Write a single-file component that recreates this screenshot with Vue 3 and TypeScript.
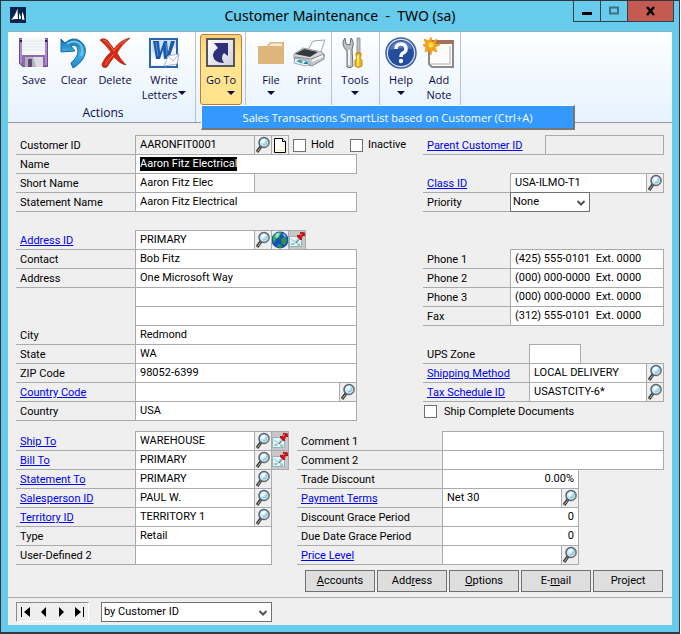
<script setup lang="ts">
import { onMounted, ref } from 'vue'

type Tool = 'lookup' | 'note' | 'globe' | 'map'

interface Field {
  id: string
  label: string
  value?: string
  link?: boolean
  size?: 'short' | 'medium' | 'one' | 'two' | 'three' | 'zone'
  tools?: Tool[]
  align?: 'right'
  readonly?: boolean
  kind?: 'select' | 'account'
}

const identity = ref<Field[]>([
  { id: 'customer', label: 'Customer ID', value: 'AARONFIT0001', size: 'two', tools: ['lookup', 'note'], readonly: true, kind: 'account' },
  { id: 'name', label: 'Name', value: 'Aaron Fitz Electrical' },
  { id: 'short-name', label: 'Short Name', value: 'Aaron Fitz Elec', size: 'short' },
  { id: 'statement-name', label: 'Statement Name', value: 'Aaron Fitz Electrical' },
])

const address = ref<Field[]>([
  { id: 'address-id', label: 'Address ID', value: 'PRIMARY', link: true, size: 'three', tools: ['lookup', 'globe', 'map'] },
  { id: 'contact', label: 'Contact', value: 'Bob Fitz' },
  { id: 'address1', label: 'Address', value: 'One Microsoft Way' },
  { id: 'address2', label: '' },
  { id: 'address3', label: '' },
  { id: 'city', label: 'City', value: 'Redmond' },
  { id: 'state', label: 'State', value: 'WA' },
  { id: 'zip', label: 'ZIP Code', value: '98052-6399' },
  { id: 'country-code', label: 'Country Code', link: true, tools: ['lookup'] },
  { id: 'country', label: 'Country', value: 'USA' },
])

const parent = ref<Field[]>([
  { id: 'parent', label: 'Parent Customer ID', link: true, readonly: true },
])

const classes = ref<Field[]>([
  { id: 'class', label: 'Class ID', value: 'USA-ILMO-T1', link: true, tools: ['lookup'] },
  { id: 'priority', label: 'Priority', value: 'None', kind: 'select' },
])

const phones = ref<Field[]>([
  { id: 'phone1', label: 'Phone 1', value: '(425) 555-0101  Ext. 0000' },
  { id: 'phone2', label: 'Phone 2', value: '(000) 000-0000  Ext. 0000' },
  { id: 'phone3', label: 'Phone 3', value: '(000) 000-0000  Ext. 0000' },
  { id: 'fax', label: 'Fax', value: '(312) 555-0101  Ext. 0000' },
])

const shipping = ref<Field[]>([
  { id: 'ups', label: 'UPS Zone', size: 'zone' },
  { id: 'method', label: 'Shipping Method', value: 'LOCAL DELIVERY', link: true, tools: ['lookup'] },
  { id: 'tax', label: 'Tax Schedule ID', value: 'USASTCITY-6*', link: true, tools: ['lookup'] },
])

const accounts = ref<Field[]>([
  { id: 'ship-to', label: 'Ship To', value: 'WAREHOUSE', link: true, size: 'two', tools: ['lookup', 'map'] },
  { id: 'bill-to', label: 'Bill To', value: 'PRIMARY', link: true, size: 'two', tools: ['lookup', 'map'] },
  { id: 'statement-to', label: 'Statement To', value: 'PRIMARY', link: true, size: 'one', tools: ['lookup'] },
  { id: 'salesperson', label: 'Salesperson ID', value: 'PAUL W.', link: true, size: 'one', tools: ['lookup'] },
  { id: 'territory', label: 'Territory ID', value: 'TERRITORY 1', link: true, size: 'one', tools: ['lookup'] },
  { id: 'type', label: 'Type', value: 'Retail', size: 'medium' },
  { id: 'user2', label: 'User-Defined 2', size: 'medium' },
])

const terms = ref<Field[]>([
  { id: 'comment1', label: 'Comment 1' },
  { id: 'comment2', label: 'Comment 2' },
  { id: 'discount', label: 'Trade Discount', value: '0.00%', size: 'medium', align: 'right' },
  { id: 'payment', label: 'Payment Terms', value: 'Net 30', link: true, size: 'one', tools: ['lookup'] },
  { id: 'discount-grace', label: 'Discount Grace Period', value: '0', size: 'medium', align: 'right' },
  { id: 'due-grace', label: 'Due Date Grace Period', value: '0', size: 'medium', align: 'right' },
  { id: 'price', label: 'Price Level', link: true, size: 'one', tools: ['lookup'] },
])

const sections = [
  { name: 'identity', rows: identity },
  { name: 'address', rows: address },
  { name: 'parent', rows: parent },
  { name: 'classes', rows: classes },
  { name: 'phones', rows: phones },
  { name: 'shipping', rows: shipping },
  { name: 'accounts', rows: accounts },
  { name: 'terms', rows: terms },
]

const panels = [
  { name: 'left', sections: sections.slice(0, 2) },
  { name: 'right', sections: sections.slice(2, 6) },
  { name: 'bottom-left', sections: sections.slice(6, 7) },
  { name: 'bottom-right', sections: sections.slice(7) },
]

const toolNames: Record<Tool, string> = {
  lookup: 'Look up',
  note: 'Note',
  globe: 'Internet information',
  map: 'Show on map',
}

const actions = [
  ['', 'A', 'ccounts'],
  ['Add', 'r', 'ess'],
  ['', 'O', 'ptions'],
  ['E-', 'm', 'ail'],
  ['Project', '', ''],
]

const hold = ref(false)
const inactive = ref(false)
const shipComplete = ref(false)
const sortBy = ref('by Customer ID')

onMounted(() => {
  const name = document.getElementById('name') as HTMLInputElement | null
  name?.focus()
  name?.select()
})
</script>

<template>
  <main class="window">
    <header class="titlebar">
      <svg class="app-icon" width="16" height="16" viewBox="0 0 16 16">
        <rect width="16" height="16" fill="#06234d" />
        <path d="M1 13Q5 9 7.500 1.500L8 12Q4 11.500 1 13zM9 12V6Q11 8 11 12zM12 12.500V4.500Q14.500 8 14.500 13z" fill="#fff" />
      </svg>
      <h1>Customer Maintenance&nbsp; -&nbsp; TWO (sa)</h1>
      <div class="window-buttons">
        <button type="button" aria-label="Minimize">
          <svg width="12" height="12"><path d="M1 7h10v3H1z" fill="#000" /></svg>
        </button>
        <button type="button" aria-label="Maximize">
          <svg width="12" height="12"><path d="M2 2.500h8v6H2z" fill="none" stroke="#3f7184" stroke-width="2" /></svg>
        </button>
        <button type="button" class="close" aria-label="Close">
          <svg width="12" height="12"><path d="M2 2l7 8M9 2l-7 8" stroke="#000" stroke-width="2.500" /></svg>
        </button>
      </div>
    </header>

    <nav class="ribbon" aria-label="Ribbon">
      <div class="group actions-group">
        <div class="group-items">
          <button type="button" class="tool w40">
            <svg width="32" height="32" viewBox="0 0 32 32">
              <path d="M1.500 1.500h28v28H4.500l-3-3z" fill="#9166b4" stroke="#6f4a94" />
              <path d="M2 2h2v24H2zM27 2h2v26h-2z" fill="#ad8aca" />
              <rect x="4" y="1" width="23" height="17" fill="#f5f7f9" />
              <path d="M4 4h23M4 7h23M4 10h23M4 13h23" stroke="#e3e8ea" />
              <rect x="7" y="20" width="18" height="10" fill="#b0b3b6" />
              <path d="M15 20h10v10h-7z" fill="#dcddde" />
              <path d="M10 22h4v8h-4z" fill="#5f4878" />
              <path d="M2 4h2M27 4h2" stroke="#2a1944" stroke-width="2" />
            </svg>
            <span>Save</span>
          </button>
          <button type="button" class="tool w40">
            <svg width="32" height="32" viewBox="0 0 32 32">
              <defs>
                <linearGradient id="undo" x1="0" y1="0" x2="0" y2="1">
                  <stop offset="0" stop-color="#1a6fae" /><stop offset=".5" stop-color="#3fb1e6" /><stop offset="1" stop-color="#1d87c4" />
                </linearGradient>
              </defs>
              <path d="M3 2l4 4Q15-1 22 4Q29 9 27 17Q25 25 15 31L13 26Q20 20 20 14Q19 6 13 9L17 14L3 15z" fill="url(#undo)" stroke="#176ba1" />
              <path d="M9 7Q16 2 22 7Q26 12 23 19" fill="none" stroke="#6dc6ee" stroke-width="2" />
            </svg>
            <span>Clear</span>
          </button>
          <button type="button" class="tool w42">
            <svg width="32" height="32" viewBox="0 0 32 32">
              <path d="M1 3Q5 0 9 4L15 12Q21 3 31 1Q22 8 18 16Q21 22 27 28Q21 27 15 20Q11 25 8 30Q3 32 3 27Q6 20 12 15Q7 8 1 3z" fill="#d62914" stroke="#a9200e" stroke-width=".7" />
              <path d="M4 3Q8 3 15 14Q20 6 27 3M6 28Q9 22 15 17" fill="none" stroke="#ee6a50" />
            </svg>
            <span>Delete</span>
          </button>
          <button type="button" class="tool w56">
            <svg width="32" height="32" viewBox="0 0 32 32">
              <rect x="2" y="2" width="27" height="28" fill="#eaf2fb" stroke="#2a66b0" stroke-width="2" />
              <path d="M4 3h24v8L4 16z" fill="#cfe1f5" />
              <path d="M3 21h16v7H3z" fill="#fff" />
              <path d="M5 4h6l1 11 4-11h3l1 11 3-11h4l-6 18h-5l-1-9-3 9H8z" fill="#1b59ae" />
              <path d="M8 5l2 14M18 6l1 12" stroke="#5490d8" />
              <path d="M20 19l11-2-2 10-13 2z" fill="#fff" stroke="#a5b6cc" />
              <path d="M20 19l5 5 6-7" fill="none" stroke="#a9b6c8" />
            </svg>
            <span>Write</span>
            <span class="with-arrow">Letters<i class="arrow"></i></span>
          </button>
        </div>
        <div class="group-title">Actions</div>
      </div>

      <div class="group goto-group">
        <button type="button" class="tool goto w42" aria-haspopup="menu" aria-expanded="true">
          <svg width="32" height="32" viewBox="0 0 32 32">
            <defs>
              <linearGradient id="goto" x1="0" y1="0" x2="1" y2="1">
                <stop offset="0" stop-color="#fff" /><stop offset="1" stop-color="#cfd0dc" />
              </linearGradient>
            </defs>
            <rect x="2" y="2" width="27" height="27" fill="url(#goto)" stroke="#55555e" stroke-width="2" />
            <path d="M9 6h14v13l-4-3Q15 20 19 26Q9 26 8 19Q8 14 13 11z" fill="#2e2f7a" />
          </svg>
          <span>Go To</span>
          <i class="arrow"></i>
        </button>
        <div class="menu" role="menu">
          <button type="button" role="menuitem">Sales Transactions SmartList based on Customer (Ctrl+A)</button>
        </div>
      </div>

      <div class="group file-group">
        <button type="button" class="tool w38">
          <svg width="32" height="32" viewBox="0 0 32 32">
            <path d="M3 9h9l3-4h14v22H3z" fill="#dcb67a" />
            <path d="M14 9l2-2.500h11V9z" fill="#f6ecdc" />
          </svg>
          <span>File</span>
          <i class="arrow"></i>
        </button>
        <button type="button" class="tool w38">
          <svg width="32" height="32" viewBox="0 0 32 32">
            <path d="M20 4l12-1-5 14-12-4z" fill="#fff" stroke="#a0a4a8" />
            <path d="M1 17l9-6 19 4 3 4-12 6L1 22z" fill="#d5d8da" stroke="#9a9ea2" />
            <path d="M2 17l9-5 14 3-8 5z" fill="#35383a" />
            <path d="M2 20l16 2 13-5v5l-12 7-17-5z" fill="#c3c6c9" stroke="#8b8f93" />
            <path d="M2 21l12 3 4 3-6 2-11-3z" fill="#e7f5fa" stroke="#888" stroke-width=".7" />
            <path d="M3 24l4-1 1 3zM10 27l3-3 3 3z" fill="#1587c0" />
            <path d="M7 23l3 1-2 3z" fill="#3ba35b" />
            <path d="M19 24l11-5" stroke="#f5f6f6" stroke-width="2" />
          </svg>
          <span>Print</span>
        </button>
      </div>

      <div class="group tools-group">
        <button type="button" class="tool w38">
          <svg width="32" height="32" viewBox="0 0 32 32">
            <path d="M6 1l1 6 4 1 1-7q4 4 1 11l1 17q-3 3-6 1V14Q1 7 6 1z" fill="#bfc3c6" stroke="#686d70" />
            <path d="M10 13v15" stroke="#f4f4f4" stroke-width="2" />
            <path d="M18 1h3v15h-3z" fill="#bfc3c6" stroke="#73777a" stroke-width=".7" />
            <path d="M17 16h5v3l-1 2 2 2v6q-3 3-7 0v-6l2-2-1-2z" fill="#f2b413" stroke="#b8780c" stroke-width=".8" />
            <path d="M19 18v11" stroke="#ffe480" stroke-width="2" />
          </svg>
          <span>Tools</span>
          <i class="arrow"></i>
        </button>
      </div>

      <div class="group help-group">
        <button type="button" class="tool w38">
          <svg width="32" height="32" viewBox="0 0 32 32">
            <circle cx="16" cy="16" r="15" fill="#dce6f6" stroke="#405f9c" stroke-width="1.500" />
            <circle cx="16" cy="16" r="13" fill="#244d9f" />
            <path d="M4 13Q8 3 17 4q8 0 10 8-11-2-23 1z" fill="#5478bd" />
            <path d="M11 12Q11 7 16 7q5 0 5 5 0 3-3 4-2 1-2 4" fill="none" stroke="#fff" stroke-width="3.500" />
            <circle cx="16" cy="24" r="2.200" fill="#fff" />
          </svg>
          <span>Help</span>
          <i class="arrow"></i>
        </button>
        <button type="button" class="tool w38">
          <svg width="32" height="32" viewBox="0 0 32 32">
            <path d="M6 5h24v25H9l-3-3z" fill="#fbfbfb" stroke="#8a8a8a" stroke-width="2" />
            <path d="M6 3h25v4H7z" fill="#a66f58" />
            <path d="M8 27h19V9" fill="none" stroke="#d4d4d4" stroke-width="2" />
            <path d="M8 0l1 5 5-3-2 5 5 1-5 2 2 5-5-2-1 5-2-5-4 2 1-5-4-2 4-1-2-5 5 2z" fill="#f6a31a" stroke="#e68f12" stroke-width=".7" />
            <circle cx="8" cy="8" r="2.500" fill="#ffe054" />
          </svg>
          <span>Add</span>
          <span>Note</span>
        </button>
      </div>
    </nav>

    <form class="form" @submit.prevent>
      <div v-for="panel in panels" :key="panel.name" class="panel" :class="panel.name">
        <section v-for="section in panel.sections" :key="section.name" :class="['fields', section.name]">
          <div v-for="field in section.rows.value" :key="field.id" class="row">
            <div class="caption" :class="{ blank: !field.label }">
              <a v-if="field.link" :id="field.id + '-label'" href="#">{{ field.label }}</a>
              <label v-else :id="field.id + '-label'" :for="field.id">{{ field.label }}</label>
            </div>
            <div v-if="field.kind === 'select'" class="picker priority">
              <select :id="field.id" v-model="field.value">
                <option>None</option>
                <option>Low</option>
                <option>High</option>
              </select>
              <svg width="8" height="6" viewBox="0 0 8 6"><path d="M.5 1L4 4.500 7.500 1" fill="none" stroke="#555" stroke-width="2" /></svg>
            </div>
            <div v-else class="control" :class="field.size ?? 'wide'">
              <input
                :id="field.id"
                v-model="field.value"
                type="text"
                :class="[field.align, { locked: field.readonly }]"
                :readonly="field.readonly"
                :aria-labelledby="field.id + '-label'"
                spellcheck="false"
                autocomplete="off"
              />
              <button
                v-for="tool in field.tools"
                :key="tool"
                type="button"
                :class="['mini', tool]"
                :aria-label="toolNames[tool]"
              >
                <svg v-if="tool === 'lookup'" width="16" height="18" viewBox="0 0 16 18">
                  <path d="M6 10.500L2 16" stroke="#333" stroke-width="3" />
                  <path d="M5.500 11.500L2.500 15.500" stroke="#c8c8a8" stroke-width="1" />
                  <circle cx="9" cy="6.500" r="5" fill="#c8e7f8" stroke="#56636f" stroke-width="1.500" />
                  <path d="M6 6q1-3 4-3v2l-2 2z" fill="#fff" />
                  <path d="M8 9l3-1 1-3" fill="none" stroke="#8cc6ec" stroke-width="1.500" />
                  <path d="M14 4v4q-1 3-4 4" fill="none" stroke="#9b9271" />
                </svg>
                <svg v-else-if="tool === 'note'" width="16" height="18" viewBox="0 0 16 18">
                  <path d="M2.500 2.500h8l3 3v11h-11z" fill="#fff" stroke="#000" />
                  <path d="M10.500 2.500v3h3" fill="#fff" stroke="#000" />
                  <path d="M4 14.500h9M12 8v6" stroke="#ecd75c" stroke-dasharray="1 1" />
                </svg>
                <svg v-else-if="tool === 'globe'" width="16" height="18" viewBox="0 0 16 18">
                  <circle cx="8" cy="9" r="8.500" fill="#1550b4" />
                  <path d="M1 6q2-5 7-5 3 1 0 3l-1 3-3 1-2 4q-2-3-1-6z" fill="#37a85e" />
                  <path d="M9 8l4-2 2 3-2 5-3-1zM6 13l4 1-1 3-4-1z" fill="#2d9648" />
                  <path d="M4 3q3-2 4 0L5 7 3 6z" fill="#9ce0c4" />
                  <path d="M11 3l3 3" stroke="#67a9ec" stroke-width="2" />
                </svg>
                <svg v-else width="16" height="18" viewBox="0 0 16 18">
                  <path d="M.5 5.500h12v10H.5z" fill="#e4f4f7" stroke="#8fb4bf" />
                  <path d="M2 8l4 3 3-3M3 14l4-3 4 3" fill="none" stroke="#a5d5e3" stroke-width="1.500" />
                  <path d="M2 13h3M8 14h3" stroke="#79b67a" />
                  <path d="M10 8.500L7 12" stroke="#555" />
                  <path d="M11 1h4l1 1v3h-2l-1 2v2h-2L8 6V4h2l1-1z" fill="#cc1c22" />
                  <path d="M8 4l5 5M11 1l5 4" stroke="#8e1117" stroke-width=".8" />
                  <path d="M11 4l2-1.500" stroke="#f57a74" />
                </svg>
              </button>
            </div>
            <div v-if="field.kind === 'account'" class="checks">
              <label><input v-model="hold" type="checkbox" />Hold</label>
              <label><input v-model="inactive" type="checkbox" />Inactive</label>
            </div>
          </div>
        </section>
        <label v-if="panel.name === 'right'" class="ship-complete">
          <input v-model="shipComplete" type="checkbox" />Ship Complete Documents
        </label>
        <div v-if="panel.name === 'bottom-right'" class="commands">
          <button v-for="part in actions" :key="part.join('')" type="button">{{ part[0] }}<u>{{ part[1] }}</u>{{ part[2] }}</button>
        </div>
      </div>
    </form>

    <footer class="footer">
      <div class="pager">
        <button type="button" aria-label="First record">
          <svg width="10" height="10"><path d="M0 0h1v10H0zM9 0v10L3 5z" /></svg>
        </button>
        <button type="button" aria-label="Previous record">
          <svg width="10" height="10"><path d="M7 0v10L2 5z" /></svg>
        </button>
        <button type="button" aria-label="Next record">
          <svg width="10" height="10"><path d="M3 0v10l5-5z" /></svg>
        </button>
        <button type="button" aria-label="Last record">
          <svg width="10" height="10"><path d="M9 0h1v10H9zM1 0v10l6-5z" /></svg>
        </button>
      </div>
      <div class="picker sort">
        <select v-model="sortBy" aria-label="Sort customers">
          <option>by Customer ID</option>
          <option>by Name</option>
          <option>by Class ID</option>
        </select>
        <svg width="8" height="6" viewBox="0 0 8 6"><path d="M.5 1L4 4.500 7.500 1" fill="none" stroke="#555" stroke-width="2" /></svg>
      </div>
    </footer>
  </main>
</template>

<style>
body {
  margin: 0;
  background: #fff;
}
</style>

<style scoped>
* {
  box-sizing: border-box;
}
button,
input,
select {
  margin: 0;
  font: inherit;
  color: inherit;
}
svg {
  display: block;
}
.window {
  margin-right: 1px;
  padding: 0 7px 7px;
  border: 1px solid #33363b;
  border-bottom-width: 2px;
  background: #67cbeb;
  color: #000;
  font-family: Roboto, 'Liberation Sans', sans-serif;
  font-size: 11px;
  line-height: 14px;
}

/* Title bar */
.titlebar {
  display: grid;
  grid-template-columns: 100px 1fr 100px;
  align-items: start;
  height: 30px;
}
.app-icon {
  margin: 6px 2px;
}
h1 {
  margin: 0;
  text-align: center;
  font: 400 14px/30px 'Noto Sans', 'Open Sans', sans-serif;
  white-space: nowrap;
}
.window-buttons {
  display: flex;
  justify-self: end;
  height: 21px;
  border: 1px solid #33404a;
  border-top: 0;
  margin-right: -2px;
}
.window-buttons button {
  display: grid;
  place-items: center;
  width: 27px;
  padding: 0;
  border: 0;
  border-right: 1px solid #33404a;
  background: none;
}
.window-buttons .close {
  width: 45px;
  border-right: 0;
  background: #c45a50;
}

/* Ribbon */
.ribbon {
  display: flex;
  height: 92px;
  border-top: 1px solid #8fb3c4;
  border-bottom: 1px solid #8e969e;
  background: linear-gradient(#fdfeff, #e6f2fd);
  color: #0a0a4a;
  font: 11px/15px 'Open Sans', 'Noto Sans', sans-serif;
}
.group {
  display: flex;
  border-right: 1px solid #b9c3cd;
  padding: 0 3px 0 6px;
}
.actions-group {
  flex-direction: column;
}
.group-items {
  display: flex;
}
.group-title {
  text-align: center;
  font-size: 12px;
  line-height: 16px;
}
.goto-group {
  position: relative;
  padding: 0 3px 0 4px;
}
.tools-group {
  padding: 0 5px 0 4px;
}
.help-group {
  padding: 0 2px;
}
.tool {
  display: flex;
  flex-direction: column;
  align-items: center;
  height: 71px;
  margin-top: 2px;
  padding: 2px 0 0;
  border: 1px solid transparent;
  border-radius: 3px;
  background: none;
  white-space: nowrap;
}
.tool svg {
  flex: none;
  margin-bottom: 3px;
}
.w38 {
  width: 38px;
}
.w40 {
  width: 40px;
}
.w42 {
  width: 42px;
}
.w56 {
  width: 56px;
}
.goto {
  border-color: #c07c31;
  background: linear-gradient(#f8cf78, #ffe391 30%, #ffe38c);
}
.arrow {
  width: 0;
  height: 0;
  margin-top: 4px;
  border: 4px solid transparent;
  border-top-color: #0a0a4a;
  border-bottom: 0;
}
.goto .arrow {
  align-self: flex-end;
  margin-right: 6px;
}
.with-arrow {
  display: flex;
  gap: 1px;
}
.menu {
  position: absolute;
  z-index: 2;
  top: 73px;
  left: 5px;
  width: 374px;
  border: 1px solid #fff;
  border-right: 2px solid #777;
  border-bottom: 2px solid #777;
}
.menu button {
  display: block;
  width: 100%;
  height: 22px;
  padding: 0;
  border: 0;
  background: #3399ff;
  color: #fff;
  white-space: nowrap;
}

/* Form */
.form {
  display: grid;
  grid-template-columns: 273fr 118fr 241fr;
  column-gap: 8px;
  row-gap: 10px;
  padding: 12px 8px 5px;
  background: #efefef;
}
.panel {
  display: flex;
  flex-direction: column;
}
.left {
  grid-column: 1 / 3;
  gap: 18px;
}
.right {
  grid-column: 3;
}
.bottom-left {
  grid-column: 1;
}
.bottom-right {
  grid-column: 2 / 4;
}
.classes {
  margin: 18px 0 37px;
}
.phones {
  margin-bottom: 18px;
}
.row {
  display: flex;
  height: 20px;
}
.row + .row {
  margin-top: -1px;
}
.caption {
  flex: 0 0 119px;
  padding: 4px 0 0 4px;
  border-bottom: 1px solid #a9a9ae;
  white-space: nowrap;
}
.caption.blank {
  border-color: transparent;
}
.caption a {
  color: #0000f0;
}
.parent .caption {
  flex-basis: 122px;
}
.classes .caption,
.phones .caption {
  flex-basis: 87px;
}
.shipping .caption {
  flex-basis: 106px;
}
.terms .caption {
  flex-basis: 145px;
}
.control {
  display: flex;
}
.control.wide {
  flex: 1;
}
.left .control.wide {
  margin-right: 58px;
}
.control.short {
  width: 120px;
}
.control.medium,
.control.one {
  width: 137px;
}
.control.two {
  width: 154px;
}
.control.three {
  width: 171px;
}
.control.zone {
  width: 52px;
}
.control input {
  flex: 1;
  width: 0;
  min-width: 0;
  padding: 0 4px 1px;
  border: 1px solid #a9a9ae;
  border-radius: 0;
  background: #fff;
  outline: 0;
  white-space: pre;
}
.control input.locked {
  background: #efefef;
}
.control input.right {
  text-align: right;
}
.control input::selection {
  background: #000;
  color: #fff;
}
.mini {
  flex: 0 0 18px;
  margin-left: -1px;
  padding: 0;
  border: 1px solid #a9a9ae;
  background: #efefef;
}
.mini.map {
  background: #c6c6cb;
}
.checks {
  display: flex;
  gap: 16px;
  padding-left: 4px;
}
.checks label,
.ship-complete {
  display: flex;
  align-items: center;
  gap: 5px;
  white-space: nowrap;
}
.ship-complete {
  height: 19px;
  padding-left: 1px;
  gap: 7px;
}
input[type='checkbox'] {
  appearance: none;
  flex: none;
  width: 13px;
  height: 13px;
  border: 1px solid #707070;
  background: #fff;
}
.picker {
  position: relative;
  height: 20px;
}
.picker svg {
  position: absolute;
  top: 8px;
  right: 5px;
  pointer-events: none;
}
.picker select {
  appearance: none;
  width: 100%;
  height: 20px;
  padding: 0 16px 0 2px;
  border: 1px solid #707070;
  border-radius: 0;
  background: #fff;
}
.priority {
  width: 80px;
}
.commands {
  display: flex;
  gap: 2px;
  margin-top: 5px;
  padding: 0 1px 0 8px;
}
.commands button {
  flex: 1;
  height: 22px;
  padding: 0;
  border: 1px solid #707070;
  background: #dedede;
}

/* Footer */
.footer {
  display: flex;
  gap: 12px;
  height: 28px;
  padding: 4px 8px;
  border-top: 1px solid #a9a9ae;
  background: #efefef;
}
.pager {
  display: flex;
  align-items: center;
  justify-content: space-around;
  width: 73px;
  height: 20px;
  border: 1px solid #8a8a8a;
  border-right-color: #fff;
  border-bottom-color: #fff;
}
.pager button {
  padding: 0;
  border: 0;
  background: none;
}
.sort {
  width: 171px;
}
</style>
